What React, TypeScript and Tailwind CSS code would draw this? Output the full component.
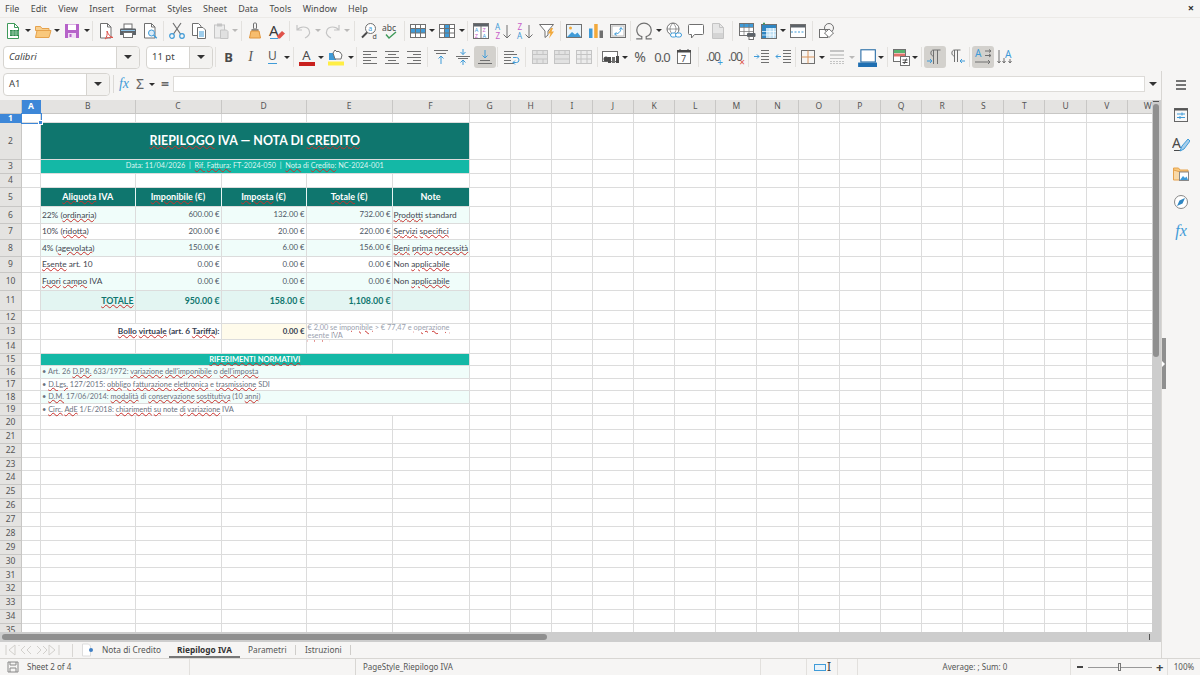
import type { ReactNode } from 'react';

const BLUE = '#3f9bd8';
const GREY = '#707070';
const DARK = '#4a4a4a';
const FAINT = '#c4c4c4';

const Svg = ({ children, size = 18 }: { children: ReactNode; size?: number }) => (
  <svg width={size} height={size} viewBox="0 0 18 18" fill="none" strokeWidth="1">
    {children}
  </svg>
);

const Lines = ({ ys, x1, x2, c = GREY }: { ys: number[]; x1: number[]; x2: number[]; c?: string }) => (
  <>
    {ys.map((y, i) => (
      <path key={i} d={`M${x1[i % x1.length]} ${y}H${x2[i % x2.length]}`} stroke={c} />
    ))}
  </>
);

const TableIcon = ({ c = GREY, fillRow, fillCol }: { c?: string; fillRow?: boolean; fillCol?: boolean }) => (
  <Svg>
    <rect x="1.5" y="2.5" width="15" height="13" fill="#fff" stroke={c} />
    {fillRow && <rect x="2" y="7" width="14" height="4" fill={BLUE} />}
    {fillCol && <rect x="7" y="3" width="4" height="12" fill={BLUE} />}
    <path d="M1.5 6.5h15M1.5 11h15M6.5 2.5v13M11.5 2.5v13" stroke={c} />
  </Svg>
);

const icons: Record<string, ReactNode> = {
  newdoc: (
    <Svg>
      <path d="M3.5 1.5h7l4 4v11h-11z" fill="#fff" stroke="#3f9a5a" />
      <path d="M10.5 1.5v4h4" stroke="#3f9a5a" />
      <rect x="6" y="8" width="9" height="6" fill="#2e8b4f" />
      <path d="M6 10h9M6 12h9M9 8v6M12 8v6" stroke="#bfe5cb" strokeWidth=".6" />
    </Svg>
  ),
  open: (
    <Svg>
      <path d="M1.5 4.5h5l1.5 2h7v2H1.5z" fill="#f7cf90" stroke="#e6a24c" />
      <path d="M1.5 15.5l1.500-7h14l-2 7z" fill="#f9c87c" stroke="#e6a24c" />
    </Svg>
  ),
  save: (
    <Svg>
      <path d="M2 2h14v14H2z" fill="#b662c9" />
      <rect x="5" y="2.5" width="8" height="5.5" fill="#fff" />
      <rect x="5" y="11" width="8" height="5" fill="#f1ddf5" />
      <rect x="6.5" y="12" width="2" height="3" fill="#b662c9" />
    </Svg>
  ),
  pdf: (
    <Svg>
      <path d="M3.5 1.5h7L14 5v11H3.5z" fill="#fff" stroke={GREY} />
      <path d="M10.5 1.5V5H14" stroke={GREY} />
      <path d="M10 9c1 3 3 6 6 6.5-3-.5-6.500 0-8 1.500 2-2 2.500-5 2-8z" stroke="#e0524a" />
    </Svg>
  ),
  print: (
    <Svg>
      <rect x="5" y="2" width="8" height="5" fill="#fff" stroke={GREY} />
      <path d="M2 6.5h14a1 1 0 0 1 1 1V13H1V7.5a1 1 0 0 1 1-1z" fill="#5d6369" />
      <rect x="4.5" y="10.5" width="9" height="5" fill="#fff" stroke={GREY} />
      <rect x="2" y="8" width="14" height="1" fill="#8ec3e6" />
    </Svg>
  ),
  preview: (
    <Svg>
      <path d="M3.5 1.5h7L14 5v11H3.5z" fill="#fff" stroke={GREY} />
      <path d="M10.5 1.5V5H14" stroke={GREY} />
      <circle cx="10.5" cy="11" r="3" fill="#dcecf8" stroke={BLUE} />
      <path d="M12.7 13.2l3 3" stroke={BLUE} strokeWidth="1.5" />
    </Svg>
  ),
  cut: (
    <Svg>
      <path d="M5 1l7.5 11M13 1L5.5 12" stroke={GREY} strokeWidth="1.200" />
      <circle cx="4" cy="14" r="2.300" stroke={BLUE} strokeWidth="1.200" />
      <circle cx="14" cy="14" r="2.300" stroke={BLUE} strokeWidth="1.200" />
    </Svg>
  ),
  copy: (
    <Svg>
      <path d="M2.5 1.5h6L11 4v9.500H2.500z" fill="#fff" stroke={GREY} />
      <path d="M7.5 5.5H13L15.500 8v8.500h-8z" fill="#fff" stroke={GREY} />
      <Lines ys={[10, 12, 14]} x1={[9]} x2={[14]} c={BLUE} />
    </Svg>
  ),
  paste: (
    <Svg>
      <rect x="2.5" y="3" width="10" height="13" fill="#ececec" stroke={FAINT} />
      <rect x="5" y="1.5" width="5" height="3" fill={FAINT} />
      <path d="M8.5 8h6L16 9.500v7H8.500z" fill="#e0e0e0" stroke={FAINT} />
    </Svg>
  ),
  clone: (
    <Svg>
      <rect x="7.5" y="1" width="3" height="6" rx="1" stroke={GREY} />
      <path d="M5.5 7h7v2h-7z" fill="#8a8a8a" />
      <path d="M5 9h8l1.500 7h-11z" fill="#f7bd6e" stroke="#e0953c" />
    </Svg>
  ),
  clear: (
    <Svg>
      <text x="1" y="14" fontSize="15" fontFamily="Noto Sans" fill="#3a3a3a">
        A
      </text>
      <path d="M9 14l5-5 3 2.500-5 5H10z" fill="#e0524a" />
      <path d="M2 16.5h8" stroke={BLUE} />
    </Svg>
  ),
  undo: (
    <Svg>
      <path d="M3 3v5h5M3.200 8C6 4 13 4 15 8s-1.500 7-4 8" stroke={FAINT} strokeWidth="1.200" />
    </Svg>
  ),
  redo: (
    <Svg>
      <path d="M15 3v5h-5M14.800 8C12 4 5 4 3 8s1.500 7 4 8" stroke={FAINT} strokeWidth="1.200" />
    </Svg>
  ),
  find: (
    <Svg>
      <circle cx="10.5" cy="6.5" r="5" fill="#fff" stroke={GREY} />
      <path d="M7 10.5l-5 5" stroke={DARK} strokeWidth="2" />
      <text x="8.3" y="9" fontSize="7" fontFamily="Noto Sans" fill={BLUE}>
        a
      </text>
      <text x="12.5" y="17" fontSize="7" fontFamily="Noto Sans" fill={DARK}>
        d
      </text>
    </Svg>
  ),
  spell: (
    <Svg>
      <text x="0" y="9" fontSize="8.500" fontFamily="Noto Sans" fill={DARK}>
        abc
      </text>
      <path d="M4 12.5l3 3.500 7-6" stroke="#3f9a5a" strokeWidth="1.400" />
    </Svg>
  ),
  rows: <TableIcon fillRow />,
  cols: <TableIcon fillCol />,
  sort: (
    <Svg>
      <rect x="1.5" y="1.5" width="15" height="15" fill="#fff" stroke={GREY} />
      <rect x="2" y="2" width="14" height="2.5" fill="#5d6369" />
      <path d="M9 4v12" stroke={GREY} />
      <text x="2.800" y="10" fontSize="5.500" fontFamily="Noto Sans" fill={BLUE}>
        A
      </text>
      <text x="2.800" y="15.500" fontSize="5.500" fontFamily="Noto Sans" fill="#c75fc9">
        Z
      </text>
      <text x="10.500" y="10" fontSize="5.500" fontFamily="Noto Sans" fill="#c75fc9">
        Z
      </text>
      <text x="10.500" y="15.500" fontSize="5.500" fontFamily="Noto Sans" fill={BLUE}>
        A
      </text>
    </Svg>
  ),
  asc: (
    <Svg>
      <text x="1" y="8" fontSize="8" fontFamily="Noto Sans" fill={BLUE}>
        A
      </text>
      <text x="1.5" y="16.5" fontSize="8" fontFamily="Noto Sans" fill="#c75fc9">
        Z
      </text>
      <path d="M13 3v13M9.5 12.5L13 16l3.500-3.500" stroke={GREY} />
    </Svg>
  ),
  desc: (
    <Svg>
      <text x="1.5" y="8" fontSize="8" fontFamily="Noto Sans" fill="#c75fc9">
        Z
      </text>
      <text x="1" y="16.5" fontSize="8" fontFamily="Noto Sans" fill={BLUE}>
        A
      </text>
      <path d="M13 3v13M9.5 12.5L13 16l3.500-3.500" stroke={GREY} />
    </Svg>
  ),
  filter: (
    <Svg>
      <path d="M1.5 2.500h14L10 9v4l-3 2.500V9z" fill="#fff" stroke={GREY} />
      <path d="M13 6l-3 5.500h2.500l-1.500 5 5-7h-2.500L15 6z" fill="#f2a93b" />
    </Svg>
  ),
  image: (
    <Svg>
      <rect x="1.5" y="2.5" width="15" height="13" fill="#eaf4fb" stroke={GREY} />
      <circle cx="5.5" cy="6" r="1.5" fill="#f2a93b" />
      <path d="M2 15l5-5 3 2.500 2.500-2L16 15z" fill={BLUE} />
    </Svg>
  ),
  chart: (
    <Svg>
      <rect x="2" y="6.5" width="3.5" height="9.5" fill={BLUE} />
      <rect x="7.2" y="2" width="3.5" height="14" fill="#f2a93b" />
      <rect x="12.5" y="8.5" width="3.5" height="7.5" fill={GREY} />
    </Svg>
  ),
  pivot: (
    <Svg>
      <rect x="1.5" y="2.5" width="15" height="13" fill="#f4f4f4" stroke={GREY} />
      <rect x="3" y="4" width="12" height="10" fill="#fff" stroke="#bbb" />
      <path d="M6 12c3 0 6-2 6-6M10.500 7.500L12 5.500l1.500 2M7.500 10.500L5.500 12l2 1.500" stroke={BLUE} />
    </Svg>
  ),
  omega: (
    <Svg size={20}>
      <path d="M2 16h5v-2c-3-1-4.500-3.500-4.500-6 0-3.500 3-6 6.500-6s6.500 2.500 6.500 6c0 2.500-1.500 5-4.500 6v2h5" stroke={GREY} strokeWidth="1.100" />
    </Svg>
  ),
  link: (
    <Svg>
      <circle cx="8" cy="7" r="6" fill="#fff" stroke={GREY} />
      <path d="M2 7h12M8 1c-4 4-4 8 0 12M8 1c4 4 4 8 0 12" stroke={GREY} strokeWidth=".7" />
      <rect x="5.5" y="11" width="6" height="4" rx="2" fill="#fff" stroke={BLUE} />
      <rect x="10.5" y="11" width="6" height="4" rx="2" fill="#fff" stroke={BLUE} />
    </Svg>
  ),
  comment: (
    <Svg>
      <path d="M2.5 2.500h13a1 1 0 0 1 1 1v8a1 1 0 0 1-1 1h-8l-3 3.500v-3.500h-2a1 1 0 0 1-1-1v-8a1 1 0 0 1 1-1z" fill="#fff" stroke={GREY} />
    </Svg>
  ),
  hf: (
    <Svg>
      <path d="M3.5 1.5h7l4 4v11h-11z" fill="#e6e6e6" stroke={FAINT} />
      <path d="M10.5 1.5v4h4" stroke={FAINT} />
      <rect x="4" y="11" width="10" height="5" fill="#d4d4d4" />
    </Svg>
  ),
  printarea: (
    <Svg>
      <rect x="1.5" y="1.5" width="14" height="12" fill="#fff" stroke={GREY} />
      <rect x="2" y="2" width="13" height="3" fill={BLUE} />
      <path d="M1.5 5.500h14M1.500 9.500h14M6 1.500v12M11 1.500v12" stroke={GREY} strokeWidth=".7" />
      <rect x="9" y="11" width="8.5" height="4" rx="1" fill="#5d6369" />
      <rect x="11" y="14.5" width="4.5" height="3" fill="#fff" stroke={GREY} />
    </Svg>
  ),
  freeze: (
    <Svg>
      <rect x="1.5" y="2.5" width="15" height="14" fill="#bfe0f4" stroke={GREY} />
      <rect x="2" y="3" width="14" height="3" fill="#2f86c2" />
      <rect x="2" y="3" width="4" height="13" fill="#2f86c2" />
      <path d="M2 9.500h14M2 13h14M10 6v10M13.500 6v10" stroke="#fff" strokeWidth=".7" />
      <path d="M4 .5v2M3 1.500h2" stroke="#3f9a5a" />
    </Svg>
  ),
  split: (
    <Svg>
      <rect x="1.5" y="2.5" width="15" height="13" fill="#fff" stroke={GREY} />
      <rect x="2" y="3" width="14" height="2.5" fill="#5d6369" />
      <path d="M2 10h14" stroke={BLUE} strokeDasharray="2 1.500" />
    </Svg>
  ),
  shapes: (
    <Svg>
      <rect x="1.5" y="7.5" width="8" height="8" fill="#fff" stroke={GREY} />
      <circle cx="11" cy="6" r="4.5" stroke={GREY} />
      <path d="M11 7l4.500 4-4.500 4.500L6.500 11z" fill="#fff" stroke={GREY} />
    </Svg>
  ),
  bold: <span className="text-[13px] font-bold text-[#4a4a4a] leading-none">B</span>,
  italic: <span className="text-[14px] italic text-[#5a5a5a] font-['Liberation_Serif',serif] leading-none">I</span>,
  underline: (
    <span className="flex flex-col items-center leading-none text-[12px] text-[#5a5a5a]">
      U<span className="w-[9px] h-[1.5px] bg-[#3f9bd8] mt-[1px]" />
    </span>
  ),
  fontcolor: (
    <span className="flex flex-col items-center text-[13px] text-[#4a4a4a] leading-none">
      A<span className="w-[16px] h-[4px] bg-[#c9211e]" />
    </span>
  ),
  highlight: (
    <Svg>
      <rect x="1" y="13.5" width="16" height="4" fill="#ffee44" />
      <path d="M2 5h7v7H2z" fill={BLUE} />
      <path d="M8 11L6 5l2-3 2 2 1-1 1 1h1l2 3-1 4z" fill="#fff" stroke={GREY} />
    </Svg>
  ),
  left: <Svg><Lines ys={[3.5, 6.5, 9.5, 12.5, 15.5]} x1={[2]} x2={[16, 10]} /></Svg>,
  center: <Svg><Lines ys={[3.5, 6.5, 9.5, 12.5, 15.5]} x1={[2, 5]} x2={[16, 13]} /></Svg>,
  right: <Svg><Lines ys={[3.5, 6.5, 9.5, 12.5, 15.5]} x1={[2, 8]} x2={[16]} /></Svg>,
  vtop: (
    <Svg>
      <path d="M2 2.5h14M4 5.500h10" stroke={GREY} />
      <path d="M9 16V8M6.500 10.500L9 8l2.500 2.500" stroke={BLUE} />
    </Svg>
  ),
  vmid: (
    <Svg>
      <path d="M2 8.5h14M4 10.500h10" stroke={GREY} />
      <path d="M9 1v5.500M6.500 4L9 6.500 11.500 4M9 17v-5M6.500 14.500L9 12l2.500 2.500" stroke={BLUE} />
    </Svg>
  ),
  vbot: (
    <Svg>
      <path d="M2 15.5h14M4 12.500h10" stroke={GREY} />
      <path d="M9 2v8M6.500 7.500L9 10l2.500-2.500" stroke={BLUE} />
    </Svg>
  ),
  wrap: (
    <Svg>
      <Lines ys={[3.5, 6.5, 9.5, 12.5, 15.5]} x1={[2]} x2={[12, 15, 9, 9, 12]} />
      <path d="M11 9.500h3.500a2 2 0 0 1 0 5H11M13 12.500l-2 2 2 2" stroke={BLUE} />
    </Svg>
  ),
  merge: (
    <Svg>
      <rect x="1.5" y="2.5" width="15" height="13" fill="#e2e2e2" stroke={FAINT} />
      <path d="M1.5 6.500h15M1.500 11h15M6 2.500v4M12 2.500v4M6 11v4.500M12 11v4.500" stroke={FAINT} />
    </Svg>
  ),
  merge2: (
    <Svg>
      <rect x="1.5" y="2.5" width="15" height="13" fill="#e2e2e2" stroke={FAINT} />
      <path d="M1.5 6.500h15M1.500 11h15M6 2.500v4M12 2.500v4" stroke={FAINT} />
    </Svg>
  ),
  merge3: (
    <Svg>
      <rect x="1.5" y="2.5" width="15" height="13" fill="#ececec" stroke={FAINT} />
      <path d="M1.5 6.500h15M1.500 11h15M6 2.500v13M12 2.500v13" stroke={FAINT} />
    </Svg>
  ),
  currency: (
    <Svg>
      <rect x=".5" y="3.5" width="15" height="10" fill="#fff" stroke={GREY} />
      <rect x="6" y="9" width="3" height="6" fill={DARK} />
      <rect x="10" y="9" width="3" height="6" fill={GREY} />
      <rect x="14" y="8" width="3" height="7" fill={DARK} />
      <circle cx="4" cy="11" r="2.5" fill={DARK} />
    </Svg>
  ),
  percent: <span className="text-[14px] text-[#5a5a5a] leading-none">%</span>,
  number: <span className="text-[13px] text-[#5a5a5a] leading-none tracking-[-1px]">0.0</span>,
  date: (
    <Svg>
      <rect x="2.5" y="2.5" width="13" height="13" fill="#fff" stroke={GREY} />
      <rect x="2" y="2" width="14" height="2.5" fill="#4a4a4a" />
      <path d="M5 1v3M13 1v3" stroke={DARK} />
      <text x="6" y="14" fontSize="9" fontFamily="Noto Sans" fill={DARK}>
        7
      </text>
    </Svg>
  ),
  addplace: (
    <span className="relative text-[12px] text-[#5a5a5a] leading-none tracking-[-1px]">
      .00
      <span className="absolute right-[-2px] bottom-[-4px] text-[10px] text-[#3f9bd8]">+</span>
    </span>
  ),
  delplace: (
    <span className="relative text-[12px] text-[#5a5a5a] leading-none tracking-[-1px]">
      .00
      <span className="absolute right-[-2px] bottom-[-4px] text-[10px] text-[#e0524a]">×</span>
    </span>
  ),
  indent: (
    <Svg>
      <Lines ys={[2.5, 5.5, 8.5, 11.5, 14.5]} x1={[8]} x2={[16]} />
      <path d="M1 8.500h5M4 6.500l2 2-2 2" stroke={BLUE} />
    </Svg>
  ),
  outdent: (
    <Svg>
      <Lines ys={[2.5, 5.5, 8.5, 11.5, 14.5]} x1={[8]} x2={[16]} />
      <path d="M6 8.500H1M3 6.500l-2 2 2 2" stroke={BLUE} />
    </Svg>
  ),
  borders: (
    <Svg>
      <rect x="2.5" y="2.5" width="13" height="13" stroke={GREY} />
      <path d="M9 2.500v13M2.500 9h13" stroke="#d9935a" />
    </Svg>
  ),
  linestyle: (
    <Svg>
      <path d="M2 3h14" stroke={FAINT} strokeWidth="2" />
      <path d="M2 7h14" stroke={FAINT} strokeWidth="1.5" />
      <path d="M2 10.500h14" stroke={FAINT} />
      <path d="M2 13.500h14M2 15.500h14" stroke={FAINT} strokeDasharray="2 1" />
    </Svg>
  ),
  bordercolor: (
    <Svg size={20}>
      <rect x="3.5" y="2.5" width="13" height="11" fill="#fff" stroke="#2a6ea8" />
      <rect x="1" y="14" width="18" height="4" fill="#1f6fb2" />
    </Svg>
  ),
  cond: (
    <Svg>
      <rect x="1.5" y="1.5" width="12" height="12" fill="#fff" stroke={GREY} />
      <rect x="2" y="2" width="11" height="3" fill="#59b36f" />
      <rect x="2" y="5.5" width="11" height="3" fill="#e0726a" />
      <rect x="8.5" y="8.5" width="9" height="9" fill="#fff" stroke={GREY} />
      <path d="M10.500 12h5M10.500 14.500h5M14.500 10.500L12 16" stroke={DARK} />
    </Svg>
  ),
  ltr: (
    <Svg>
      <path d="M7.500 16V2h7M11.500 16V2M7.500 2C4 2 4 8 7.500 8" stroke={GREY} />
      <path d="M1 13h5M4 11l2 2-2 2" stroke={BLUE} />
    </Svg>
  ),
  rtl: (
    <Svg>
      <path d="M6.500 14V2h6M9.500 14V2M6.500 2C3 2 3 8 6.500 8" stroke={GREY} />
      <path d="M17 13h-5M14 11l-2 2 2 2" stroke={BLUE} />
    </Svg>
  ),
  horiz: (
    <Svg>
      <text x="1" y="9" fontSize="10" fontFamily="Noto Sans" fill={BLUE}>
        A
      </text>
      <path d="M11 3h6M11 7.500h6M1 14h15M14 12l2 2-2 2M15 1.500L17 3l-2 1.500M15 6l2 1.500L15 9" stroke={GREY} />
    </Svg>
  ),
  vert: (
    <Svg>
      <text x="9" y="10" fontSize="10" fontFamily="Noto Sans" fill={BLUE}>
        A
      </text>
      <path d="M3 2v13M8 10v5M14 11v4M1.500 13L3 15l1.500-2M6.500 13L8 15l1.500-2M12.500 13l1.500 2 1.500-2" stroke={GREY} />
    </Svg>
  ),
};

const Btn = ({ name, active }: { name: string; active?: boolean }) => (
  <div className={`w-[22px] h-[22px] shrink-0 flex items-center justify-center rounded-[3px] ${active ? 'bg-[#d3d1cd]' : ''}`}>
    {icons[name]}
  </div>
);

const Caret = () => <span className="w-0 h-0 border-t-[3px] border-x-[3px] border-x-transparent border-t-[#2e2e2e]" />;

const Dd = ({ faint }: { faint?: boolean }) => (
  <div className={`w-[7.5px] shrink-0 flex items-center justify-center ${faint ? 'opacity-30' : ''}`}>
    <Caret />
  </div>
);

const Sep = ({ wide, tight }: { wide?: boolean; tight?: boolean }) => (
  <div className={`shrink-0 flex justify-center ${wide ? 'w-[7px]' : tight ? 'w-[2px]' : 'w-[4.5px]'}`}>
    <div className="w-px h-[20px] bg-[#e3e1de]" />
  </div>
);

const Combo = ({ text, italic, boxClass }: { text: string; italic?: boolean; boxClass: string }) => (
  <div className={`h-[23px] shrink-0 flex bg-white border border-[#d6d4d0] rounded-[4px] ${boxClass}`}>
    <div className={`flex-1 flex items-center pl-[5px] text-[9.5px] text-[#444] ${italic ? 'italic' : ''}`}>{text}</div>
    <div className="w-[23px] flex items-center justify-center border-l border-[#d6d4d0] bg-[#f3f2f0] rounded-r-[4px]">
      <span className="w-0 h-0 border-t-[4px] border-x-[4px] border-x-transparent border-t-[#333]" />
    </div>
  </div>
);

const MENU = ['File', 'Edit', 'View', 'Insert', 'Format', 'Styles', 'Sheet', 'Data', 'Tools', 'Window', 'Help'];

const MenuBar = () => (
  <div className="h-[17px] flex items-center pl-[5px] gap-[11.3px] text-[9px] text-[#4a4a4a] relative">
    {MENU.map((m) => (
      <span key={m}>{m}</span>
    ))}
    <span className="absolute right-[6px] top-[1px] text-[11px] font-bold text-[#333] leading-[14px]">×</span>
  </div>
);

const Toolbar1 = () => (
  <div className="h-[26px] flex items-center pl-[2px] border-t border-[#eceae7]">
    <Btn name="newdoc" /><Dd />
    <Btn name="open" /><Dd />
    <Btn name="save" /><Dd />
    <Sep />
    <Btn name="pdf" /><Btn name="print" /><Btn name="preview" />
    <Sep />
    <Btn name="cut" /><Btn name="copy" /><Btn name="paste" /><Dd faint />
    <Sep />
    <Btn name="clone" /><Btn name="clear" />
    <Sep />
    <Btn name="undo" /><Dd faint /><Btn name="redo" /><Dd faint />
    <Sep wide />
    <Btn name="find" /><Btn name="spell" />
    <Sep />
    <Btn name="rows" /><Dd /><Btn name="cols" /><Dd />
    <Sep />
    <Btn name="sort" /><Btn name="asc" /><Btn name="desc" /><Btn name="filter" />
    <Sep />
    <Btn name="image" /><Btn name="chart" /><Btn name="pivot" />
    <Sep />
    <Btn name="omega" /><Dd /><Btn name="link" /><Btn name="comment" /><Btn name="hf" />
    <Sep wide />
    <Btn name="printarea" /><Btn name="freeze" /><Dd /><Btn name="split" />
    <Sep wide />
    <Btn name="shapes" />
  </div>
);

const Toolbar2 = () => (
  <div className="h-[28px] flex items-center pl-[3px]">
    <Combo text="Calibri" italic boxClass="w-[137px]" />
    <div className="w-[6px] shrink-0" />
    <Combo text="11 pt" boxClass="w-[67px]" />
    <Sep />
    <Btn name="bold" /><Btn name="italic" /><Btn name="underline" /><Dd />
    <Sep />
    <Btn name="fontcolor" /><Dd /><Btn name="highlight" /><Dd />
    <Sep />
    <Btn name="left" /><Btn name="center" /><Btn name="right" />
    <Sep />
    <Btn name="vtop" /><Btn name="vmid" /><Btn name="vbot" active />
    <Sep />
    <Btn name="wrap" />
    <Sep wide />
    <Btn name="merge" /><Btn name="merge2" /><Btn name="merge3" />
    <Sep />
    <Btn name="currency" /><Dd /><Btn name="percent" /><Btn name="number" /><Btn name="date" />
    <Sep wide />
    <Btn name="addplace" /><Btn name="delplace" />
    <Sep />
    <Btn name="indent" /><Btn name="outdent" />
    <Sep tight />
    <Btn name="borders" /><Dd /><Btn name="linestyle" /><Dd faint /><Btn name="bordercolor" /><Dd />
    <Sep />
    <Btn name="cond" /><Dd />
    <Sep />
    <Btn name="ltr" active /><Btn name="rtl" />
    <Sep />
    <Btn name="horiz" active /><Btn name="vert" />
  </div>
);

const FormulaBar = () => (
  <div className="h-[29px] pb-[3px] flex items-center pl-[3px] shrink-0">
    <Combo text="A1" boxClass="w-[107px]" />
    <div className="w-[7px] shrink-0 flex justify-center">
      <div className="w-px h-[18px] bg-[#dcdad7]" />
    </div>
    <div className="w-[14px] text-center text-[14px] italic text-[#3f9bd8] font-['Liberation_Serif',serif] leading-none">fx</div>
    <div className="w-[14px] ml-[2px] text-center text-[14px] text-[#666] leading-none">Σ</div>
    <div className="w-[6px] ml-[2px] mr-[4px] flex">
      <Caret />
    </div>
    <div className="w-[12px] text-center text-[14px] font-bold text-[#666] leading-none">=</div>
    <div className="ml-[2px] w-[972px] h-[16px] bg-white border border-[#dddbd8]" />
    <div className="flex-1 flex justify-center">
      <span className="w-0 h-0 border-t-[4px] border-x-[4px] border-x-transparent border-t-[#333]" />
    </div>
  </div>
);

// red wavy line under the words the spell checker does not know
const S = ({ children }: { children: ReactNode }) => (
  <span className="underline decoration-wavy decoration-[#c9302c] decoration-1 underline-offset-0">{children}</span>
);

type Cell = { span?: string; cls?: string; body?: ReactNode };

const TD = 'text-[8.3px] text-[#3f4650]';
const NUM = 'text-[7.8px] text-[#4b5563] justify-end';
const ROWA = 'bg-[#f0fdfa]';
const TEAL = 'bg-[#0f766e] text-white font-bold text-[9px] justify-center border-r-[#e6f5f3]';
const TOT = 'bg-[#e3f5f2] text-[#0f766e] font-bold text-[8.8px] justify-end';
const REF = 'text-[7.4px] text-[#6b7280]';

const num = (v: string, alt: boolean): Cell => ({ cls: `${NUM} ${alt ? ROWA : ''}`, body: v });

const dataRow = (label: ReactNode, a: string, b: string, c: string, note: ReactNode, alt: boolean): Cell[] => [
  { cls: `${TD} ${alt ? ROWA : ''}`, body: <span>{label}</span> },
  num(a, alt),
  num(b, alt),
  num(c, alt),
  { cls: `${TD} whitespace-nowrap ${alt ? ROWA : ''}`, body: <span>{note}</span> },
];

const sheet: Record<number, Cell[]> = {
  2: [
    {
      span: 'col-span-5',
      cls: 'bg-[#0f766e] text-white text-[12.4px] font-bold justify-center',
      body: (
        <span>
          <S>RIEPILOGO</S> IVA — NOTA DI <S>CREDITO</S>
        </span>
      ),
    },
  ],
  3: [
    {
      span: 'col-span-5',
      cls: 'bg-[#14b8a6] text-[#dcf5f1] text-[7.3px] justify-center',
      body: (
        <span>
          Data: 11/04/2026 &nbsp;|&nbsp; <S>Rif.</S> <S>Fattura:</S> FT-2024-050 &nbsp;|&nbsp; <S>Nota</S> di <S>Credito:</S> NC-2024-001
        </span>
      ),
    },
  ],
  5: [
    { cls: TEAL, body: <span><S>Aliquota</S> IVA</span> },
    { cls: TEAL, body: <span><S>Imponibile</S> (€)</span> },
    { cls: TEAL, body: <span><S>Imposta</S> (€)</span> },
    { cls: TEAL, body: <span><S>Totale</S> (€)</span> },
    { cls: TEAL, body: 'Note' },
  ],
  6: dataRow(<>22% (<S>ordinaria</S>)</>, '600.00 €', '132.00 €', '732.00 €', <><S>Prodotti</S> standard</>, true),
  7: dataRow(<>10% (<S>ridotta</S>)</>, '200.00 €', '20.00 €', '220.00 €', <><S>Servizi</S> <S>specifici</S></>, false),
  8: dataRow(<>4% (<S>agevolata</S>)</>, '150.00 €', '6.00 €', '156.00 €', <><S>Beni</S> <S>prima</S> <S>necessità</S></>, true),
  9: dataRow(<><S>Esente</S> art. 10</>, '0.00 €', '0.00 €', '0.00 €', <>Non <S>applicabile</S></>, false),
  10: dataRow(<><S>Fuori</S> <S>campo</S> IVA</>, '0.00 €', '0.00 €', '0.00 €', <>Non <S>applicabile</S></>, true),
  11: [
    { cls: 'bg-[#e3f5f2] text-[#0f766e] font-bold text-[8.8px] justify-end', body: <S>TOTALE</S> },
    { cls: TOT, body: '950.00 €' },
    { cls: TOT, body: '158.00 €' },
    { cls: TOT, body: '1,108.00 €' },
    { cls: 'bg-[#e3f5f2]' },
  ],
  13: [
    {
      span: 'col-span-2',
      cls: 'text-[8.3px] font-bold text-[#374151] justify-end',
      body: (
        <span>
          <S>Bollo</S> <S>virtuale</S> (art. 6 <S>Tariffa</S>):
        </span>
      ),
    },
    { cls: 'bg-[#fffbeb] text-[7.8px] font-bold text-[#374151] justify-end', body: '0.00 €' },
    {
      span: 'col-span-2',
      cls: 'text-[7.4px] text-[#9ca3af] leading-[8px]',
      body: (
        <span>
          € 2,00 <S>se</S> <S>imponibile</S> &gt; € 77,47 e <S>operazione</S>
          <br />
          <S>esente</S> IVA
        </span>
      ),
    },
  ],
  15: [
    {
      span: 'col-span-5',
      cls: 'bg-[#14b8a6] text-white text-[7.5px] font-bold justify-center',
      body: <S>RIFERIMENTI NORMATIVI</S>,
    },
  ],
  16: [{ span: 'col-span-5', cls: `${REF} ${ROWA}`, body: <span>• Art. 26 <S>D.P.R.</S> 633/1972: <S>variazione</S> <S>dell'imponibile</S> o <S>dell'imposta</S></span> }],
  17: [{ span: 'col-span-5', cls: REF, body: <span>• <S>D.Lgs.</S> 127/2015: <S>obbligo</S> <S>fatturazione</S> <S>elettronica</S> e <S>trasmissione</S> SDI</span> }],
  18: [{ span: 'col-span-5', cls: `${REF} ${ROWA}`, body: <span>• <S>D.M.</S> 17/06/2014: <S>modalità</S> di <S>conservazione</S> <S>sostitutiva</S> (10 <S>anni</S>)</span> }],
  19: [{ span: 'col-span-5', cls: REF, body: <span>• <S>Circ.</S> <S>AdE</S> 1/E/2018: <S>chiarimenti</S> <S>su</S> note <S>di</S> <S>variazione</S> IVA</span> }],
};

const COLS = 'ABCDEFGHIJKLMNOPQRSTUVW'.split('');
const ROWS = Array.from({ length: 35 }, (_, i) => i + 1);
const cellLine = 'border-r border-b border-[#dcdcdc]';
const headCls = "flex items-center justify-center text-[8.5px] border-r border-b font-['Noto_Sans',sans-serif]";
const headOn = 'bg-[#3d87d8] text-white font-bold border-[#3d87d8]';
const headOff = 'bg-[#e4e3e1] text-[#555] border-[#c8c7c5]';

const Sheet = () => (
  <div className="flex-1 min-w-0 overflow-hidden font-['Lato',sans-serif]">
    <div className="grid w-max bg-white grid-cols-[22px_19px_94.5px_86px_85px_86px_77px_repeat(17,41.15px)] grid-rows-[14px_9px_37px_14px_14px_19px_17px_16px_17px_16px_18px_20px_13px_16px_14px_12px_13px_12px_13px_12px_repeat(16,13.86px)]">
      <div className="bg-[#e4e3e1] border-r border-b border-[#c8c7c5]" />
      {COLS.map((c) => (
        <div key={c} className={`${headCls} ${c === 'A' ? headOn : headOff}`}>
          {c}
        </div>
      ))}
      {ROWS.map((r) => {
        const cells = sheet[r];
        const used = cells ? cells.reduce((n, c) => n + (c.span ? Number(c.span.slice(-1)) : 1), 0) : 0;
        return (
          <div key={r} className="contents">
            <div className={`${headCls} ${r === 1 ? headOn : headOff}`}>{r}</div>
            <div className={`relative ${cellLine} ${r === 1 ? 'outline-1 outline-[#3d87d8] z-10' : ''}`}>
              {r === 1 && <div className="absolute right-[-3px] bottom-[-3px] w-[5px] h-[5px] bg-[#3d87d8] border border-white" />}
            </div>
            {cells?.map((c, i) => (
              <div key={i} className={`flex items-center px-px min-w-0 ${cellLine} ${c.span ?? ''} ${c.cls ?? ''}`}>
                {c.body}
              </div>
            ))}
            {COLS.slice(1 + used).map((c) => (
              <div key={c} className={cellLine} />
            ))}
          </div>
        );
      })}
    </div>
  </div>
);

const TabNav = () => (
  <svg width="60" height="14" viewBox="0 0 60 14" fill="none" stroke="#d2d0cc">
    <path d="M1 2v10M10 2L4 7l6 5zM14 2v1" />
    <path d="M20 3l-4 4 4 4M26 3l-4 4 4 4" />
    <path d="M32 3l4 4-4 4M38 3l4 4-4 4" />
    <path d="M44 2l6 5-6 5zM54 2v10" />
  </svg>
);

const TabBar = () => (
  <div className="h-[16px] shrink-0 flex items-center text-[8.3px] text-[#555] whitespace-nowrap">
    <div className="w-[72px] pl-[5px] flex items-center">
      <TabNav />
    </div>
    <div className="w-px h-[13px] bg-[#d8d6d3]" />
    <div className="w-[29px] flex justify-center">
      <svg width="14" height="14" viewBox="0 0 14 14" fill="none">
        <path d="M1.500 1h6l2 2v10h-8z" fill="#fff" stroke="#ddd" />
        <circle cx="10" cy="7" r="2" fill="#3f7fc4" />
      </svg>
    </div>
    <div className="w-[67px]">Nota di Credito</div>
    <div className="w-[71px] h-full text-center font-bold text-[#333] border-b-[2px] border-[#777] leading-[15px]">Riepilogo IVA</div>
    <div className="w-[55px] pl-[8px]">Parametri</div>
    <div className="w-px h-[10px] bg-[#cfcdca]" />
    <div className="w-[54px] pl-[9px]">Istruzioni</div>
    <div className="w-px h-[10px] bg-[#cfcdca]" />
  </div>
);

const StatusCell = ({ cls, children }: { cls: string; children?: ReactNode }) => (
  <div className={`h-full shrink-0 flex items-center border-r border-[#e2e0dd] ${cls}`}>{children}</div>
);

const StatusBar = () => (
  <div className="h-[17px] shrink-0 flex items-center text-[8px] text-[#555] border-t border-[#d8d6d3] whitespace-nowrap">
    <StatusCell cls="w-[190px] pl-[7px] gap-[8px]">
      <svg width="12" height="12" viewBox="0 0 12 12" fill="none" stroke="#888">
        <path d="M1 1h10v10H1z" />
        <path d="M3 1v3h6V1M3 11V7h6v4" />
      </svg>
      Sheet 2 of 4
    </StatusCell>
    <StatusCell cls="w-[166px] border-r-[#d8d6d3]" />
    <StatusCell cls="w-[405px] pl-[7px]">PageStyle_Riepilogo IVA</StatusCell>
    <StatusCell cls="w-[46px]" />
    <StatusCell cls="w-[31px] pl-[7px] gap-[1px]">
      <span className="w-[12px] h-[7px] border border-[#3f9bd8] bg-[#e8f3fb]" />
      <span className="text-[12px] leading-none text-[#444]">I</span>
    </StatusCell>
    <StatusCell cls="w-[20px]" />
    <StatusCell cls="w-[213px] justify-center pl-[22px]">Average: ; Sum: 0</StatusCell>
    <div className="h-full w-[97px] shrink-0 flex items-center border-r border-[#e2e0dd] relative">
      <span className="absolute left-[6px] w-[6px] h-[1.5px] bg-[#444]" />
      <span className="absolute left-[17px] w-[64px] h-px bg-[#999]" />
      <span className="absolute left-[47px] w-[3px] h-[8px] border border-[#777] bg-[#f4f3f1]" />
      <span className="absolute left-[85px] text-[13px] font-bold leading-none text-[#444]">+</span>
    </div>
    <div className="flex-1 text-center">100%</div>
  </div>
);

const Sidebar = () => (
  <div className="w-[39px] shrink-0 border-l border-[#d8d6d3] flex flex-col items-center pt-[4px] relative">
    <div className="h-[20px] flex items-center">
      <svg width="14" height="14" viewBox="0 0 14 14" stroke="#4a4a4a" strokeWidth="1.5">
        <path d="M2 3h10M2 7h10M2 11h10" />
      </svg>
    </div>
    <div className="h-[30px] mt-[5px] flex items-center">
      <svg width="16" height="16" viewBox="0 0 16 16" fill="none">
        <rect x="1.5" y="1.5" width="13" height="13" fill="#f8f8f8" stroke="#666" />
        <rect x="1.5" y="1.5" width="13" height="2" fill="#555" />
        <path d="M4 7h8M4 10.500h8M9 5.500v3M7 9v3" stroke="#3f9bd8" />
      </svg>
    </div>
    <div className="h-[30px] flex items-center">
      <svg width="18" height="18" viewBox="0 0 18 18" fill="none">
        <text x="0" y="12" fontSize="14" fontFamily="Noto Sans" fill="#4a4a4a">A</text>
        <path d="M2 14.500h7" stroke="#4a4a4a" />
        <path d="M16 3l-6 7-2 5 4-2 6-8z" fill="#a8cfeb" stroke="#3f9bd8" />
      </svg>
    </div>
    <div className="h-[27px] flex items-center">
      <svg width="18" height="18" viewBox="0 0 18 18" fill="none">
        <path d="M1.500 3h5L8 5h8v2H1.500z" fill="#f9c87c" stroke="#e6a24c" />
        <path d="M1.500 5v10h7V7z" fill="#f9d9a8" stroke="#e6a24c" />
        <rect x="7.5" y="7" width="9" height="8.5" fill="#fff" stroke="#888" />
        <path d="M8 15l3-4 2 2 1.500-1.500L16 15z" fill="#3f9bd8" />
      </svg>
    </div>
    <div className="h-[29px] flex items-center">
      <svg width="16" height="16" viewBox="0 0 16 16" fill="none">
        <circle cx="8" cy="8" r="6.5" fill="#fff" stroke="#888" />
        <path d="M12 4L9.500 9.500 4 12l2.500-5.500z" fill="#2f86c2" />
      </svg>
    </div>
    <div className="h-[30px] flex items-center text-[16px] italic text-[#3f9bd8] font-['Liberation_Serif',serif] leading-none">fx</div>
    {/* grip of the collapsed deck */}
    <div className="absolute left-0 top-[267px] w-[4px] h-[51px] bg-[#8f8f8f] flex items-center">
      <span className="w-0 h-0 border-y-[3px] border-l-[3px] border-y-transparent border-l-white" />
    </div>
  </div>
);

export default function App() {
  return (
    <div className="w-[1200px] h-[675px] overflow-hidden flex flex-col bg-[#f6f5f4] font-['Noto_Sans',sans-serif]">
      <MenuBar />
      <Toolbar1 />
      <Toolbar2 />
      <div className="flex-1 min-h-0 flex">
        <div className="flex-1 min-w-0 flex flex-col">
          <FormulaBar />
          <div className="flex-1 min-h-0 flex">
            <Sheet />
            <div className="w-[9px] shrink-0 bg-[#cdcdcd] pt-px pl-px">
              <div className="w-[6px] h-px bg-[#555]" />
              <div className="w-[6px] h-[253px] mt-[2px] rounded-[3px] bg-[#8f8f8f]" />
            </div>
          </div>
          <div className="h-[10px] shrink-0 bg-[#cdcdcd] flex items-center justify-between pl-[2px] pr-[11px]">
            <div className="w-[545px] h-[6px] rounded-[3px] bg-[#8f8f8f]" />
            <div className="w-px h-[6px] bg-[#555]" />
          </div>
          <TabBar />
        </div>
        <Sidebar />
      </div>
      <StatusBar />
    </div>
  );
}
